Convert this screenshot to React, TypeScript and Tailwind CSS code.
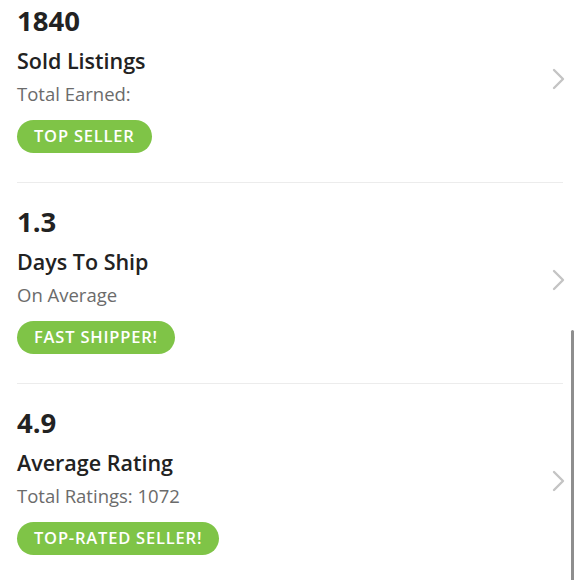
import { FC } from "react";

type Stat = { value: string; title: string; sub: string; badge: string }

const stats: Stat[] = [
  { value: "1840", title: "Sold Listings", sub: "Total Earned:", badge: "TOP SELLER" },
  { value: "1.3", title: "Days To Ship", sub: "On Average", badge: "FAST SHIPPER!" },
  { value: "4.9", title: "Average Rating", sub: "Total Ratings: 1072", badge: "TOP-RATED SELLER!" },
]

const Chevron: FC = () => (
  <svg width="14" height="22" viewBox="0 0 14 22" fill="none">
    <path d="M2 2l9 9-9 9" stroke="#c4c4c4" strokeWidth="2.4" strokeLinecap="round" strokeLinejoin="round" />
  </svg>
)

const StatRow: FC<{ stat: Stat; last?: boolean }> = ({ stat, last }) => (
  <div className={"flex items-center justify-between pt-[23px] pb-[29px] " + (last ? "" : "border-b border-[#ececec]")}>
    <div className="flex flex-col items-start">
      <p className="text-[27.5px] leading-[32px] font-bold text-[#222]">{stat.value}</p>
      <p className="mt-[8px] text-[21.5px] leading-[32px] font-semibold text-[#222]">{stat.title}</p>
      <p className="mt-[4px] text-[18.5px] leading-[26px] text-[#6b6b6b]">{stat.sub}</p>
      <span className="mt-[13px] h-[33px] flex items-center rounded-full bg-[#7fc447] px-[17px] text-[16.5px] font-semibold tracking-[0.8px] text-white">
        {stat.badge}
      </span>
    </div>
    <div className="mr-[-3px]"><Chevron /></div>
  </div>
)

export default function App() {
  return (
    <div className="relative h-[580px] w-[580px] overflow-hidden bg-white font-['Open_Sans',sans-serif]">
      <div className="mt-[-18px] px-[17px]">
        {stats.map((s, i) => (
          <StatRow key={s.value} stat={s} last={i === stats.length - 1} />
        ))}
      </div>
      <div className="absolute right-[6px] top-[330px] h-[260px] w-[3px] rounded-full bg-[#8e8e8e]" />
    </div>
  )
}
